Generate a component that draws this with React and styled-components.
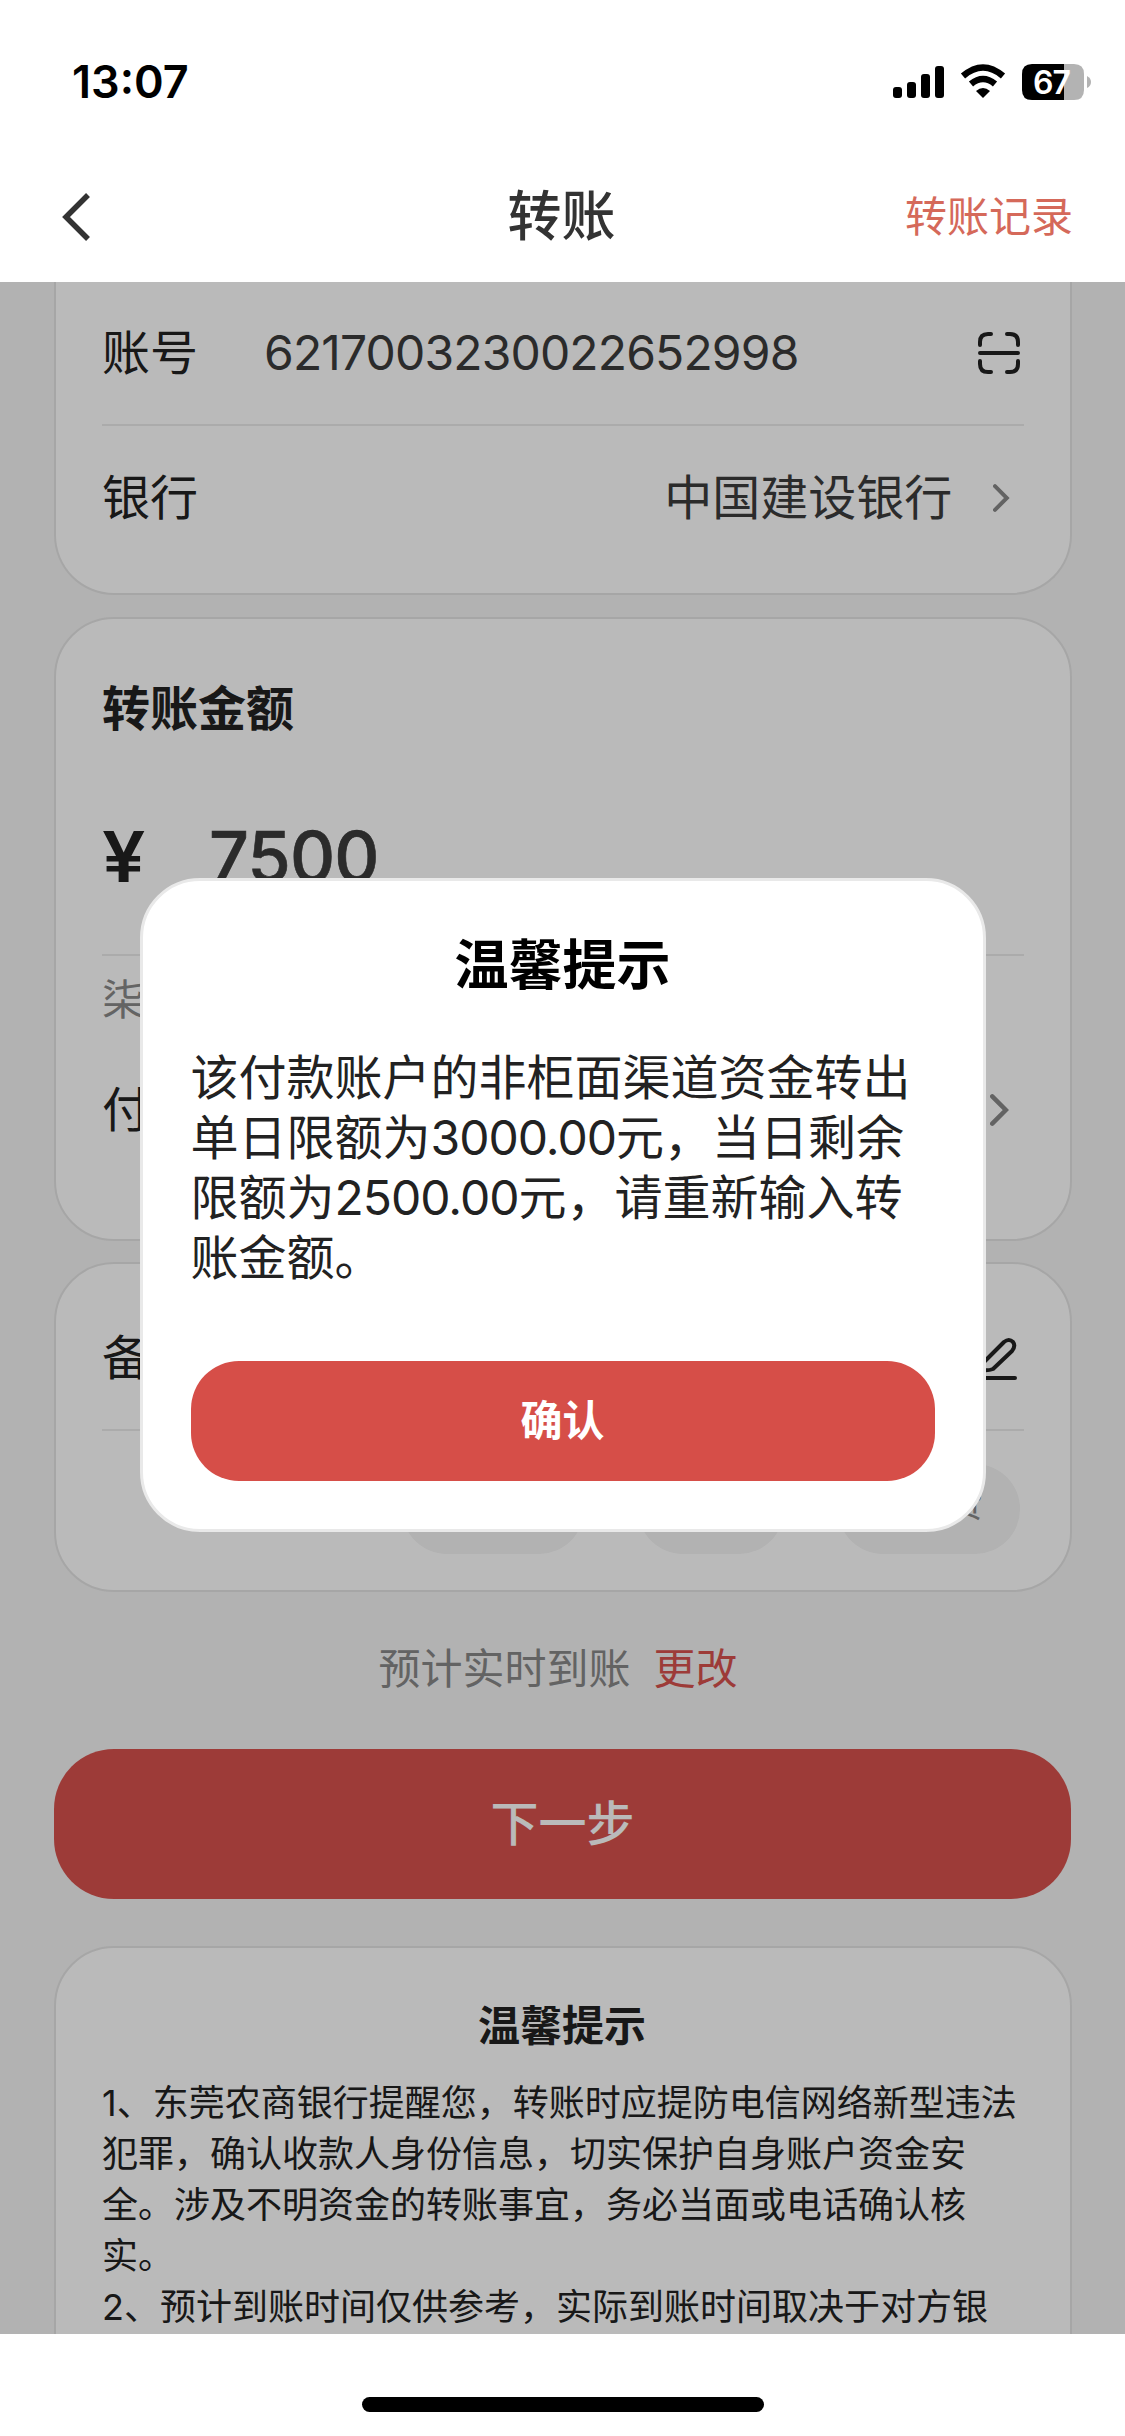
import React from "react";
import styled, { createGlobalStyle } from "styled-components";

const GlobalStyle = createGlobalStyle`
  * {
    box-sizing: border-box;
  }
  body {
    margin: 0;
    background: #fff;
    font-family: Inter, "Noto Sans CJK SC", sans-serif;
    color: #222;
  }
  button {
    border: none;
    font-family: inherit;
  }
`;

const Screen = styled.div`
  display: flex;
  flex-direction: column;
  width: 1125px;
  height: 2436px;
  overflow: hidden;
  background: #fff;
`;

const StatusBar = styled.header`
  display: flex;
  justify-content: space-between;
  align-items: center;
  height: 116px;
  padding: 48px 33px 0 72px;
  color: #000;
`;

const Time = styled.span`
  font-size: 45px;
  font-weight: 600;
  line-height: 68px;
`;

const StatusIcons = styled.div`
  display: flex;
  align-items: center;
`;

const NavBar = styled.nav`
  display: grid;
  grid-template-columns: 1fr auto 1fr;
  align-items: center;
  height: 166px;
  padding: 36px 52px 0;

  svg {
    margin-left: 8px;
  }
`;

const NavTitle = styled.h1`
  margin: 0 2px 0 0;
  color: #333;
  font-size: 54px;
  font-weight: 500;
  line-height: 70px;
`;

const NavLink = styled.a`
  justify-self: end;
  color: #d5695a;
  font-size: 42px;
  line-height: 60px;
`;

const Content = styled.main`
  position: relative;
  display: flex;
  flex-direction: column;
  height: 2052px;
  padding: 0 53px 0 54px;
  overflow: hidden;
  background: #f4f4f4;
`;

const Card = styled.section`
  flex-shrink: 0;
  height: ${(props) => props.$height}px;
  margin-bottom: ${(props) => props.$gap || 0}px;
  padding: 0 46px;
  border: 2px solid #e4e4e4;
  border-radius: ${(props) => (props.$cutTop ? "0 0 60px 60px" : "60px")};
  border-top-width: ${(props) => (props.$cutTop ? 0 : 2)}px;
  background: #fff;
`;

const Row = styled.div`
  display: flex;
  align-items: center;
  height: ${(props) => props.$height}px;
  padding-top: ${(props) => props.$top || 0}px;
  padding-right: ${(props) => props.$right || 0}px;
`;

const Divider = styled.hr`
  height: 2px;
  margin: 0;
  border: none;
  background: #ebebeb;
`;

const Label = styled.span`
  width: 162px;
  padding-bottom: 9px;
  font-size: 48px;
  white-space: nowrap;
`;

const Value = styled.span`
  flex: 1;
  color: #3c3c3c;
  font-size: 48px;
`;

const AccountNumber = styled(Value)`
  padding-bottom: 2px;
  letter-spacing: -0.85px;
`;

const BankName = styled(Value)`
  padding: 0 41px 9px 0;
  text-align: right;
`;

const CardTitle = styled.h2`
  margin: 0;
  padding-top: 55px;
  font-size: 48px;
  font-weight: 700;
  line-height: 70px;
`;

const AmountRow = styled.div`
  display: flex;
  align-items: flex-end;
  height: 210px;
  padding-bottom: 55px;
`;

const Currency = styled.span`
  width: 107px;
  font-size: 70px;
  font-weight: 600;
  line-height: 84px;
  transform: scaleX(1.1);
  transform-origin: left;
`;

const Amount = styled.span`
  color: #3c3c3c;
  font-size: 70px;
  font-weight: 500;
  line-height: 84px;
  letter-spacing: -0.8px;
  -webkit-text-stroke: 0.6px #3c3c3c;
`;

const AmountWords = styled.p`
  margin: 14px 0 0;
  color: #8a8a8a;
  font-size: 42px;
  line-height: 60px;
`;

const Chips = styled.div`
  display: flex;
  justify-content: flex-end;
  gap: 54px;
  padding: 33px 4px 0 0;
`;

const Chip = styled.span`
  height: 90px;
  padding: 0 37px;
  border-radius: 45px;
  background: #f4f4f4;
  color: #8a8a8a;
  font-size: 36px;
  line-height: 80px;
`;

const Arrival = styled.p`
  display: flex;
  justify-content: center;
  gap: 23px;
  margin: 0 0 50px;
  padding-right: 10px;
  color: #888;
  font-size: 42px;
  line-height: 60px;

  a {
    color: #d7524e;
  }
`;

const NextButton = styled.button`
  flex-shrink: 0;
  height: 150px;
  margin: 0 1px 47px 0;
  padding-bottom: 10px;
  border-radius: 60px;
  background: #d7524e;
  color: #fff;
  font-size: 48px;
  font-weight: 500;
`;

const NoticeTitle = styled.h3`
  margin: 0;
  padding: 46px 2px 0 0;
  font-size: 42px;
  font-weight: 700;
  line-height: 64px;
  text-align: center;
`;

const Notice = styled.p`
  margin: ${(props) => (props.$first ? "20px" : "0")} 0 0;
  font-size: 36px;
  line-height: 51px;
  white-space: nowrap;
`;

const Overlay = styled.div`
  position: absolute;
  inset: 0;
  display: flex;
  justify-content: center;
  align-items: flex-start;
  padding-top: 596px;
  background: rgba(0, 0, 0, 0.27);
`;

const Dialog = styled.div`
  display: flex;
  flex-direction: column;
  width: 846px;
  height: 654px;
  padding: 47px 48px 48px;
  border: 3px solid #e9e9e9;
  border-radius: 60px;
  background: #fff;
`;

const DialogTitle = styled.h2`
  margin: 0 0 44px;
  color: #000;
  font-size: 54px;
  font-weight: 700;
  line-height: 76px;
  text-align: center;
`;

const DialogText = styled.p`
  margin: 0 0 auto;
  font-size: 48px;
  line-height: 60px;
  white-space: nowrap;
`;

const Digits = styled.span`
  letter-spacing: -1px;
`;

const ConfirmButton = styled.button`
  height: 120px;
  padding-bottom: 8px;
  border-radius: 48px;
  background: #d64e48;
  color: #fff;
  font-size: 42px;
  font-weight: 700;
`;

const Footer = styled.footer`
  display: flex;
  justify-content: center;
  height: 102px;
  padding-top: 63px;
`;

const HomeIndicator = styled.div`
  width: 402px;
  height: 15px;
  border-radius: 8px;
  background: #000;
`;

const StatusGlyphs = () => (
  <svg width="199" height="36" viewBox="0 0 199 36">
    <rect x="0" y="23" width="9" height="11" rx="3" />
    <rect x="14" y="18" width="9" height="16" rx="3" />
    <rect x="28" y="10" width="9" height="24" rx="3" />
    <rect x="42" y="2" width="9" height="32" rx="3" />
    <path d="M90 34 L83 27 Q90 21 97 27 Z" />
    <path d="M78 20 Q90 10 102 20" fill="none" stroke="#000" strokeWidth="6.5" />
    <path d="M70 12 Q90 -5 110 12" fill="none" stroke="#000" strokeWidth="6.5" />
    <path d="M139 0 H171 V36 H139 Q129 36 129 26 V10 Q129 0 139 0 Z" />
    <path d="M171 0 H181 Q191 0 191 10 V26 Q191 36 181 36 H171 Z" fill="#b3b3b3" />
    <path d="M194 12 Q198 14 198 18 Q198 22 194 24 Z" fill="#b3b3b3" />
    <text x="158.5" y="29.5" fill="#fff" fontSize="32" fontWeight="600" textAnchor="middle" letterSpacing="-1">
      67
    </text>
  </svg>
);

const BackIcon = () => (
  <svg width="34" height="52" viewBox="0 0 34 52">
    <path d="M28 4 L6 26 L28 48" fill="none" stroke="#333" strokeWidth="5.5" />
  </svg>
);

const ScanIcon = () => (
  <svg width="42" height="42" viewBox="0 0 42 42" fill="none" stroke="#222" strokeWidth="4" strokeLinecap="round">
    <path d="M2 13 V10 Q2 2 10 2 H13 M29 2 H32 Q40 2 40 10 V13 M2 29 V32 Q2 40 10 40 H13 M29 40 H32 Q40 40 40 32 V29 M2 21 H40" />
  </svg>
);

const ChevronIcon = ({ height = 28 }) => (
  <svg width={height * 0.6} height={height} viewBox="0 0 17 28">
    <path d="M2 2 L14 14 L2 26" fill="none" stroke="#888" strokeWidth="4" strokeLinecap="round" />
  </svg>
);

const EditIcon = () => (
  <svg width="44" height="44" viewBox="0 0 44 44" fill="none" stroke="#222" strokeWidth="4" strokeLinecap="round" strokeLinejoin="round">
    <path d="M9 33 L11 25 L31 5 Q36 1 40 5 Q43 9 39 14 L20 32 Q15 34 9 33 Z M5 41 H42" />
  </svg>
);

const App = () => {
  return (
    <Screen>
      <GlobalStyle />
      <StatusBar>
        <Time>13:07</Time>
        <StatusIcons>
          <StatusGlyphs />
        </StatusIcons>
      </StatusBar>
      <NavBar>
        <BackIcon />
        <NavTitle>转账</NavTitle>
        <NavLink>转账记录</NavLink>
      </NavBar>
      <Content>
        <Card $height={313} $gap={22} $cutTop>
          <Row $height={142} $right={4}>
            <Label>账号</Label>
            <AccountNumber>6217003230022652998</AccountNumber>
            <ScanIcon />
          </Row>
          <Divider />
          <Row $height={144} $right={14}>
            <Label>银行</Label>
            <BankName>中国建设银行</BankName>
            <ChevronIcon />
          </Row>
        </Card>
        <Card $height={624} $gap={21}>
          <CardTitle>转账金额</CardTitle>
          <AmountRow>
            <Currency>¥</Currency>
            <Amount>7500</Amount>
          </AmountRow>
          <Divider />
          <AmountWords>柒仟伍佰元整</AmountWords>
          <Row $height={160} $right={15}>
            <Label>付款账户</Label>
            <Value />
            <ChevronIcon height={32} />
          </Row>
        </Card>
        <Card $height={330} $gap={47}>
          <Row $height={165} $top={24} $right={7}>
            <Label>备注</Label>
            <Value />
            <EditIcon />
          </Row>
          <Divider />
          <Chips>
            <Chip>生活费</Chip>
            <Chip>借款</Chip>
            <Chip>还房贷</Chip>
          </Chips>
        </Card>
        <Arrival>
          预计实时到账 <a>更改</a>
        </Arrival>
        <NextButton>下一步</NextButton>
        <Card $height={500}>
          <NoticeTitle>温馨提示</NoticeTitle>
          <Notice $first>
            1、东莞农商银行提醒您，转账时应提防电信网络新型违法
            <br />
            犯罪，确认收款人身份信息，切实保护自身账户资金安
            <br />
            全。涉及不明资金的转账事宜，务必当面或电话确认核
            <br />
            实。
          </Notice>
          <Notice>2、预计到账时间仅供参考，实际到账时间取决于对方银</Notice>
        </Card>
        <Overlay>
          <Dialog>
            <DialogTitle>温馨提示</DialogTitle>
            <DialogText>
              该付款账户的非柜面渠道资金转出
              <br />
              单日限额为<Digits>3000.00</Digits>元，当日剩余
              <br />
              限额为<Digits>2500.00</Digits>元，请重新输入转
              <br />
              账金额。
            </DialogText>
            <ConfirmButton>确认</ConfirmButton>
          </Dialog>
        </Overlay>
      </Content>
      <Footer>
        <HomeIndicator />
      </Footer>
    </Screen>
  );
};

export default App;
